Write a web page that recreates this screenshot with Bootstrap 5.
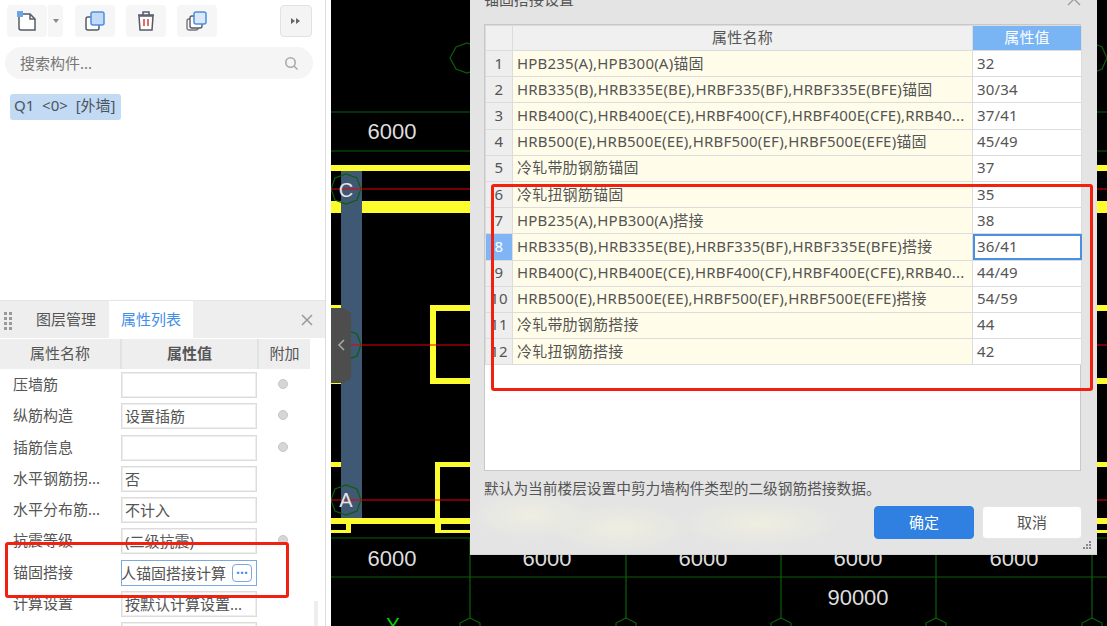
<!DOCTYPE html>
<html lang="zh-CN">
<head>
<meta charset="UTF-8">
<title>锚固搭接设置</title>
<link rel="stylesheet" href="https://cdn.jsdelivr.net/npm/bootstrap@5.3.3/dist/css/bootstrap.min.css">
<style>
html, body { height: 626px; overflow: hidden; }
body { font-family: "Noto Sans", "Noto Sans CJK SC", sans-serif; font-size: 15px; color: #555; background: #fff; }
.app-page { width: 1107px; height: 626px; position: relative; overflow: hidden; }

/* left side */
.side-panel { width: 326px; border-right: 1px solid #ddd; }
.side-top { height: 300px; }
.tool-row { height: 47px; padding: 5px 13px 0 7px; }
.tool-btn { width: 40px; height: 32px; background: #f6f6f6; border-radius: 4px; }
.tool-next { margin-left: 11px; }
.tool-arrow { width: 15px; height: 32px; background: #f6f6f6; border-radius: 0 4px 4px 0; margin-left: 1px; margin-right: 1px; }
.tool-more { width: 32px; height: 32px; background: #f4f4f4; border: 1px solid #e2e2e2; border-radius: 4px; }
.search-box { height: 32px; margin: 0 12px 0 5px; padding: 0 14px 0 15px; background: #f5f5f5; border-radius: 16px; color: #777; }
.item-chip { margin: 15px 0 0 10px; width: 111px; height: 26px; line-height: 23px; padding-left: 4px; background: #c2daf3; border-radius: 3px; white-space: pre; color: #4a5560; }
.side-bottom { height: 326px; border-top: 1px solid #e6e6e6; }
.tab-bar { height: 37px; background: #eee; }
.grip-icon { width: 22px; }
.tab-item { width: 84px; line-height: 37px; text-align: center; }
.tab-gap { width: 87px; line-height: 37px; padding-left: 14px; color: #555; white-space: nowrap; }
.tab-on { background: #fff; color: #3f8ee8; }
.close-x { margin-left: auto; margin-right: 12px; }
.prop-head { height: 30px; width: 310px; background: #eee; line-height: 29px; text-align: center; margin-top: 1px; }
.prop-head > div + div { border-left: 2px solid #e2e2e2; }
.col-name { width: 120px; }
.col-value { width: 137px; }
.col-extra { width: 53px; }
.prop-list { padding-top: 3px; position: relative; }
.prop-row { height: 31.3px; }
.prop-label { width: 121px; padding-left: 13px; padding-top: 1px; white-space: nowrap; }
.prop-input { width: 136px; height: 26px; border: 1px solid #dcdcdc; outline: 1px solid #eee; outline-offset: -2px; line-height: 24px; padding: 0 3px; white-space: nowrap; overflow: hidden; }
.prop-active { border-color: #7ba7e2; outline: none; justify-content: space-between; padding: 0; }
.prop-clip { margin-left: -1px; }
.more-btn { width: 20px; height: 18px; line-height: 15px; border: 1px solid #7ba7e2; border-radius: 4px; color: #3f8ee8; text-align: center; font-weight: 700; font-size: 14px; flex: none; }
.dot-mark { width: 10px; height: 10px; border-radius: 50%; background: #d6d6d6; border: 1px solid #c6c6c6; margin-left: 21px; margin-top: 7px; }
.side-scroll { position: absolute; left: 314px; top: 232px; width: 4px; height: 40px; background: #eee; }

/* canvas */
.cad-gutter { width: 5px; }
.cad-view { width: 776px; height: 626px; background: #000; }
.cad-view svg { display: block; }
.cad-num { fill: #ddd; font-family: "Liberation Sans", sans-serif; font-size: 22px; text-anchor: middle; }
.cad-tag { fill: #e4e4e4; font-family: "Liberation Sans", sans-serif; font-size: 20px; text-anchor: middle; }

/* dialog over canvas */
.set-dialog { position: absolute; left: 470px; top: -17px; width: 627px; height: 572px; padding-left: 14px; padding-right: 15px; color: #555;
  background: radial-gradient(ellipse 60px 24px at 60px 532px, #eeeee2, transparent), radial-gradient(ellipse 70px 24px at 150px 545px, #eeeee0, transparent), radial-gradient(ellipse 80px 24px at 290px 540px, #eeeee0, transparent), #e4e4e4; border-bottom: 1px solid #d6d6d6; }
.dialog-title { height: 41px; line-height: 32px; font-size: 15px; position: relative; }
.dialog-close { position: absolute; right: 1px; top: 9px; }
.table-box { height: 447px; width: 597px; background: #fff; border: 1px solid #c8c8c8; }
.set-table { table-layout: fixed; width: 596px; margin: 0; border-collapse: collapse; letter-spacing: .2px; }
.set-table td, .set-table th { padding: 0 4px 2px; border: 1px solid #dcdcdc; height: 26.2px; font-weight: 400; white-space: nowrap; overflow: hidden; color: #555; background: #fff; line-height: 18px; }
.set-table th { background: #f0f0f0; text-align: center; height: 25px; }
.set-table .idx-cell { background: #eee; text-align: center; padding: 0 0 2px; }
.set-table .name-cell { background: #fffde9; }
.set-table .head-on { background: #79b4f5; color: #fff; }
.set-table .idx-on { background: #7fb5f5; color: #fff; }
.set-table .cell-on { outline: 2px solid #4a90e2; outline-offset: -2px; }
.note-line { height: 35px; line-height: 35px; font-size: 14.7px; white-space: nowrap; }
.act-row { gap: 8px; }
.act-btn { width: 100px; height: 33px; padding: 0; font-size: 15px; border-radius: 4px; line-height: 31px; }
.act-ok { background: #2f80e0; border: 1px solid #2f80e0; color: #fff; }
.act-no { background: #fff; border: 1px solid #e6e6e6; color: #555; }
.grip-corner { position: absolute; right: 5px; bottom: 4px; }

/* red annotation frames */
.red-frame { position: absolute; border: 3px solid #f2200f; border-radius: 3px; pointer-events: none; }
.frame-left { left: 5px; top: 542px; width: 284px; height: 56px; }
.frame-right { left: 491px; top: 184px; width: 602px; height: 207px; }
</style>
</head>
<body>
<div class="app-page d-flex">
  <div class="side-panel flex-shrink-0">
    <div class="side-top">
      <div class="tool-row d-flex align-items-start">
        <div class="tool-btn d-flex align-items-center justify-content-center">
          <svg width="22" height="22" viewBox="0 0 22 22"><path d="M3 4h11l5 5v11H5a2 2 0 0 1-2-2z" fill="#fff" stroke="#555b66" stroke-width="1.5"/><path d="M14 4v5h5" fill="none" stroke="#555b66" stroke-width="1.5"/><rect x="1" y="1" width="6" height="6" fill="#6aa5ec"/></svg>
        </div>
        <div class="tool-arrow d-flex align-items-center justify-content-center">
          <svg width="8" height="5" viewBox="0 0 8 5"><path d="M1 0h6L4 4z" fill="#888"/></svg>
        </div>
        <div class="tool-btn tool-next d-flex align-items-center justify-content-center">
          <svg width="22" height="22" viewBox="0 0 22 22"><rect x="2" y="7" width="13" height="13" rx="2" fill="#fff" stroke="#555b66" stroke-width="1.5"/><rect x="7" y="2" width="13" height="13" rx="2" fill="#c3d9f5" stroke="#4a90e2" stroke-width="1.5"/></svg>
        </div>
        <div class="tool-btn tool-next d-flex align-items-center justify-content-center">
          <svg width="22" height="22" viewBox="0 0 22 22"><path d="M4 6h14l-1 14H5z" fill="#fff" stroke="#555b66" stroke-width="1.5"/><path d="M3 5h16M8 5V2h6v3" fill="none" stroke="#555b66" stroke-width="1.5"/><path d="M9 9v7M13 9v7" stroke="#e04444" stroke-width="1.6"/></svg>
        </div>
        <div class="tool-btn tool-next d-flex align-items-center justify-content-center">
          <svg width="22" height="22" viewBox="0 0 22 22"><rect x="1" y="9" width="11" height="11" rx="2" fill="none" stroke="#777" stroke-width="1.4"/><rect x="4" y="6" width="12" height="12" rx="2" fill="#fff" stroke="#555b66" stroke-width="1.4"/><rect x="8" y="2" width="12" height="12" rx="2" fill="#dbe8f8" stroke="#4a90e2" stroke-width="1.5"/></svg>
        </div>
        <div class="tool-more d-flex align-items-center justify-content-center ms-auto">
          <svg width="10" height="8" viewBox="0 0 10 8"><path d="M0 1l4 3-4 3zM5 1l4 3-4 3z" fill="#666"/></svg>
        </div>
      </div>
      <div class="search-box d-flex align-items-center justify-content-between">
        <span>搜索构件...</span>
        <svg width="15" height="15" viewBox="0 0 15 15"><circle cx="6.5" cy="6.5" r="4.7" fill="none" stroke="#aaa" stroke-width="1.6"/><path d="M10 10l3.5 3.5" stroke="#aaa" stroke-width="1.6"/></svg>
      </div>
      <div class="item-chip">Q1  &lt;0&gt;  [外墙]</div>
    </div>
    <div class="side-bottom">
      <div class="tab-bar d-flex align-items-center">
        <div class="grip-icon ps-1">
          <svg width="9" height="18" viewBox="0 0 9 18"><g fill="#999"><rect y="0" width="3" height="3"/><rect x="5" y="0" width="3" height="3"/><rect y="5" width="3" height="3"/><rect x="5" y="5" width="3" height="3"/><rect y="10" width="3" height="3"/><rect x="5" y="10" width="3" height="3"/><rect y="15" width="3" height="3"/><rect x="5" y="15" width="3" height="3"/></g></svg>
        </div>
        <div class="tab-gap">图层管理</div>
        <div class="tab-item tab-on">属性列表</div>
        <svg class="close-x" width="12" height="12" viewBox="0 0 12 12"><path d="M1 1l10 10M11 1L1 11" stroke="#999" stroke-width="1.5"/></svg>
      </div>
      <div class="prop-head d-flex">
        <div class="col-name">属性名称</div>
        <div class="col-value fw-bold">属性值</div>
        <div class="col-extra">附加</div>
      </div>
      <div class="prop-list">
        <div class="prop-row d-flex align-items-start"><div class="prop-label">压墙筋</div><div class="prop-input"></div><div class="dot-mark"></div></div>
        <div class="prop-row d-flex align-items-start"><div class="prop-label">纵筋构造</div><div class="prop-input">设置插筋</div><div class="dot-mark"></div></div>
        <div class="prop-row d-flex align-items-start"><div class="prop-label">插筋信息</div><div class="prop-input"></div><div class="dot-mark"></div></div>
        <div class="prop-row d-flex align-items-start"><div class="prop-label">水平钢筋拐...</div><div class="prop-input">否</div></div>
        <div class="prop-row d-flex align-items-start"><div class="prop-label">水平分布筋...</div><div class="prop-input">不计入</div></div>
        <div class="prop-row d-flex align-items-start"><div class="prop-label">抗震等级</div><div class="prop-input">(二级抗震)</div><div class="dot-mark"></div></div>
        <div class="prop-row d-flex align-items-start"><div class="prop-label">锚固搭接</div><div class="prop-input prop-active d-flex align-items-center"><span class="prop-clip">人锚固搭接计算</span><span class="more-btn me-1">···</span></div></div>
        <div class="prop-row d-flex align-items-start"><div class="prop-label">计算设置</div><div class="prop-input">按默认计算设置...</div></div>
        <div class="prop-row d-flex align-items-start"><div class="prop-label"></div><div class="prop-input"></div></div>
        <div class="side-scroll"></div>
      </div>
    </div>
  </div>
  <div class="cad-gutter flex-shrink-0"></div>
  <div class="cad-view flex-shrink-0">
    <svg width="776" height="626" viewBox="331 0 776 626">
      <!-- grid -->
      <g stroke="#0a5f0a" stroke-width="1.2" fill="none">
        <path d="M331 112H1107M331 151H1107M331 538H1107M331 577H1107M470 538V618M626 538V618M781 538V618M936 538V618M1092 538V618"/>
        <polygon points="467,43 478,47 484,58 478,69 467,73 456,69 450,58 456,47"/>
        <polygon points="1092,43 1102,47 1107,58 1102,69 1092,73 1082,69 1077,58 1082,47"/>
        <polygon points="470,618 480,623 480,640 460,640 460,623"/>
        <polygon points="626,618 636,623 636,640 616,640 616,623"/>
        <polygon points="781,618 791,623 791,640 771,640 771,623"/>
        <polygon points="936,618 946,623 946,640 926,640 926,623"/>
        <polygon points="1092,618 1102,623 1102,640 1082,640 1082,623"/>
      </g>
      <!-- column -->
      <rect x="341" y="171" width="21" height="347" fill="#3f5873"/>
      <!-- walls -->
      <g fill="#fdfd2e">
        <rect x="331" y="165" width="776" height="6"/>
        <rect x="331" y="201" width="10" height="12"/>
        <rect x="362" y="201" width="745" height="12"/>
        <rect x="331" y="305" width="10" height="3"/>
        <rect x="331" y="380" width="10" height="4"/>
        <rect x="331" y="462" width="10" height="5"/>
        <rect x="331" y="518" width="776" height="6"/>
        <rect x="331" y="524" width="20" height="9"/>
        <rect x="435" y="524" width="672" height="9"/>
        <rect x="435" y="462" width="5" height="56"/>
        <rect x="435" y="462" width="672" height="5"/>
        <rect x="430" y="305" width="6" height="79"/>
        <rect x="430" y="305" width="677" height="6"/>
        <rect x="430" y="378" width="677" height="6"/>
      </g>
      <g fill="#000">
        <rect x="331" y="524" width="15" height="6"/>
        <rect x="441" y="524" width="666" height="6"/>
      </g>
      <!-- axis circles -->
      <g stroke="#0a5f0a" stroke-width="1.2" fill="none">
        <polygon points="346,174 357,178 361,189 357,200 346,204 335,200 331,189 335,178"/>
        <polygon points="346,330 357,334 361,345 357,356 346,360 335,356 331,345 335,334"/>
        <polygon points="346,485 357,489 361,500 357,511 346,515 335,511 331,500 335,489"/>
      </g>
      <path d="M331 189H1107M331 345H1107M331 500H1107" stroke="#e8000a" stroke-width="1.2"/>
      <text class="cad-tag" x="346" y="197">C</text>
      <text class="cad-tag" x="346" y="507">A</text>
      <text class="cad-num" x="392" y="139">6000</text>
      <text class="cad-num" x="392" y="566">6000</text>
      <text class="cad-num" x="547" y="566">6000</text>
      <text class="cad-num" x="703" y="566">6000</text>
      <text class="cad-num" x="858" y="566">6000</text>
      <text class="cad-num" x="1014" y="566">6000</text>
      <text class="cad-num" x="858" y="605">90000</text>
      <text x="393" y="632" fill="#0bd00b" font-family="Liberation Sans, sans-serif" font-size="20" text-anchor="middle">Y</text>
      <!-- collapse handle -->
      <path d="M331 308H344L351 313V378L344 383H331Z" fill="#4d4d4d"/>
      <path d="M344 340l-5 5 5 5" fill="none" stroke="#aaa" stroke-width="1.5"/>
    </svg>
  </div>

  <div class="set-dialog">
    <div class="dialog-title">锚固搭接设置
      <svg class="dialog-close" width="14" height="14" viewBox="0 0 14 14"><path d="M1 1l12 12M13 1L1 13" stroke="#999" stroke-width="1.3"/></svg>
    </div>
    <div class="table-box">
      <table class="set-table">
        <colgroup><col style="width:27px"><col style="width:460px"><col style="width:109px"></colgroup>
        <thead><tr><th></th><th>属性名称</th><th class="head-on">属性值</th></tr></thead>
        <tbody id="setRows"></tbody>
      </table>
    </div>
    <div class="note-line">默认为当前楼层设置中剪力墙构件类型的二级钢筋搭接数据。</div>
    <div class="d-flex justify-content-end act-row">
      <button type="button" class="btn act-btn act-ok">确定</button>
      <button type="button" class="btn act-btn act-no">取消</button>
    </div>
    <svg class="grip-corner" width="9" height="9" viewBox="0 0 9 9"><g fill="#888"><rect x="6" y="0" width="2" height="2"/><rect x="3" y="3" width="2" height="2"/><rect x="6" y="3" width="2" height="2"/><rect x="0" y="6" width="2" height="2"/><rect x="3" y="6" width="2" height="2"/><rect x="6" y="6" width="2" height="2"/></g></svg>
  </div>

  <div class="red-frame frame-left"></div>
  <div class="red-frame frame-right"></div>
</div>

<script src="https://cdn.jsdelivr.net/npm/bootstrap@5.3.3/dist/js/bootstrap.bundle.min.js"></script>
<script>
  const rows = [
    ["HPB235(A),HPB300(A)锚固", "32"],
    ["HRB335(B),HRB335E(BE),HRBF335(BF),HRBF335E(BFE)锚固", "30/34"],
    ["HRB400(C),HRB400E(CE),HRBF400(CF),HRBF400E(CFE),RRB40...", "37/41"],
    ["HRB500(E),HRB500E(EE),HRBF500(EF),HRBF500E(EFE)锚固", "45/49"],
    ["冷轧带肋钢筋锚固", "37"],
    ["冷轧扭钢筋锚固", "35"],
    ["HPB235(A),HPB300(A)搭接", "38"],
    ["HRB335(B),HRB335E(BE),HRBF335(BF),HRBF335E(BFE)搭接", "36/41"],
    ["HRB400(C),HRB400E(CE),HRBF400(CF),HRBF400E(CFE),RRB40...", "44/49"],
    ["HRB500(E),HRB500E(EE),HRBF500(EF),HRBF500E(EFE)搭接", "54/59"],
    ["冷轧带肋钢筋搭接", "44"],
    ["冷轧扭钢筋搭接", "42"],
  ];
  document.getElementById("setRows").innerHTML = rows
    .map(function (r, i) {
      const on = i === 7;
      return `<tr><td class="idx-cell ${on ? "idx-on" : ""}">${i + 1}</td><td class="name-cell">${r[0]}</td><td class="${on ? "cell-on" : ""}">${r[1]}</td></tr>`;
    })
    .join("");
</script>
</body>
</html>
